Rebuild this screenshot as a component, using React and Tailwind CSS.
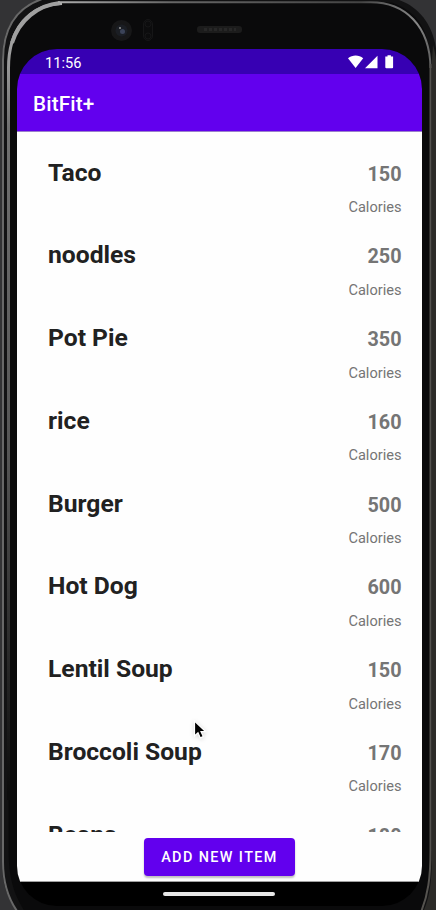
import React from 'react';

const foods = [
  ['Taco', 150],
  ['noodles', 250],
  ['Pot Pie', 350],
  ['rice', 160],
  ['Burger', 500],
  ['Hot Dog', 600],
  ['Lentil Soup', 150],
  ['Broccoli Soup', 170],
  ['Beans', 180],
];

function PhoneFrame() {
  return (
    <svg className="absolute inset-0" width="436" height="910" viewBox="0 0 436 910" aria-hidden="true">
      <defs>
        <linearGradient id="innerRim" gradientUnits="userSpaceOnUse" x1="0" y1="0" x2="0" y2="910">
          <stop offset="0" stopColor="#b0b0b0" />
          <stop offset="0.07" stopColor="#999" />
          <stop offset="0.14" stopColor="#707070" />
          <stop offset="0.5" stopColor="#555" />
          <stop offset="0.87" stopColor="#0d0d0d" />
        </linearGradient>
        <linearGradient id="topRim" gradientUnits="userSpaceOnUse" x1="60" y1="0" x2="436" y2="0">
          <stop offset="0" stopColor="#aaa" />
          <stop offset="0.3" stopColor="#666" />
          <stop offset="0.8" stopColor="#444" />
          <stop offset="0.95" stopColor="#888" />
          <stop offset="1" stopColor="#555" />
        </linearGradient>
      </defs>
      <rect width="436" height="910" fill="#333335" />
      <path d="M2 60C2 28 16 8 42 -1H396C420 6 437 28 437 62V910H17C7 898 2 884 2 862z" fill="#121213" />
      <path d="M433 45C437 58 436 62 436 80V910H424C430 896 432 880 432 850V60z" fill="#2c2b28" />
      <path d="M42 -1C16 8 3 28 3 60V862C3 884 8 898 17 911" fill="none" stroke="#686868" strokeWidth="2" />
      <path d="M58 2.500C26 7 8.500 28 8.500 66V850C8.500 878 14 895 25 912H422C428 898 430 880 430 850V66C430 30 418 12 392 2.500z" fill="#0a0a0b" />
      <path d="M62 3.500C28 5 8.500 30 8.500 68V800" fill="none" stroke="url(#innerRim)" strokeWidth="3" />
      <path d="M60 3C38 5 19 20 12 43" fill="none" stroke="#a0a0a0" strokeWidth="4" />
      <path d="M58 2.300H370C405 2 430 26 430.500 68" fill="none" stroke="url(#topRim)" strokeWidth="2" />
      <path d="M430.500 64V850C430.500 878 428 895 421 912" fill="none" stroke="#55534f" strokeWidth="2" />
      <circle cx="121.500" cy="30.500" r="10.500" fill="#171718" />
      <circle cx="121.500" cy="30.500" r="6" fill="#1b1e24" />
      <circle cx="122.500" cy="31.500" r="2.500" fill="#3b4358" />
      <circle cx="120" cy="28" r="1" fill="#999" />
      <rect x="143.500" y="19.500" width="9" height="21" rx="4.500" fill="#0c0c0d" stroke="#161617" />
      <circle cx="148" cy="24" r="3" fill="none" stroke="#161617" />
      <circle cx="148" cy="36" r="3" fill="none" stroke="#161617" />
      <rect x="197" y="26" width="45" height="7" rx="3" fill="#1c1c1c" />
      <path d="M204 29.500h32" stroke="#272727" strokeWidth="3" strokeDasharray="3 2" />
    </svg>
  );
}

function StatusIcons() {
  return (
    <svg width="46" height="14" viewBox="0 0 46 14" fill="#fff" aria-hidden="true">
      <path d="M0 3.300C4.500-.3 10.800-.3 15.200 3.300L7.600 13z" />
      <path d="M29.500 .7V13.200H17z" />
      <path d="M37.300 1.500h2.200V.2h3.400v1.300h2.200v10.700q0 1-1 1h-5.800q-1 0-1-1z" />
    </svg>
  );
}

function FoodRow({ name, calories }) {
  return (
    <li className="flex h-[82.75px] shrink-0 justify-between pr-[20.5px] pl-[31.5px]">
      <h2 className="pt-[9.6px] text-[24.65px] leading-[30px] font-bold text-[#212121]">{name}</h2>
      <div className="flex flex-col items-end text-[#757575]">
        <span className="pt-[14.6px] text-[19.8px] leading-6 font-bold">{calories}</span>
        <span className="pt-[11.6px] text-[14.6px] leading-[18px]">Calories</span>
      </div>
    </li>
  );
}

export default function App() {
  return (
    <div className="relative h-[910px] w-[436px] overflow-hidden font-['Roboto',sans-serif]">
      <PhoneFrame />
      <div className="relative pt-[49px] pl-[16.5px]">
        <main className="flex h-[857px] w-[405.5px] flex-col overflow-hidden rounded-[40px] bg-black">
          <div className="flex h-[25px] shrink-0 items-center justify-between bg-[#3700b3] pr-[28px] pl-[28.5px] text-white">
            <span className="pt-[3px] text-[14.6px] leading-5">11:56</span>
            <StatusIcons />
          </div>
          <header className="flex h-[57px] shrink-0 items-center bg-[#6200ee] pl-[16.5px]">
            <h1 className="pt-[3px] text-[20.7px] leading-6 font-medium tracking-[0.15px] text-white">BitFit+</h1>
          </header>
          <div className="flex h-[751px] shrink-0 flex-col border-b border-[#a0a0a0] bg-[#fefefe]">
            <ul className="flex h-[701px] shrink-0 flex-col overflow-hidden border-t border-[#9a80cb] pt-4">
              {foods.map(([name, calories]) => (
                <FoodRow key={name} name={name} calories={calories} />
              ))}
            </ul>
            <button className="mt-[6px] ml-[127.5px] h-[38px] w-[151px] shrink-0 rounded bg-[#6200ee] pt-[2px] text-[14.4px] font-medium tracking-[1.4px] text-white shadow-[0_2px_2px_rgba(0,0,0,0.25)]">
              ADD NEW ITEM
            </button>
          </div>
          <div className="mt-[10px] ml-[146.5px] h-1 w-28 shrink-0 rounded-full bg-[#e8e8e8]" />
        </main>
      </div>
      <svg className="absolute top-[720px] left-[193px] drop-shadow-sm" width="14" height="20" viewBox="0 0 14 20" aria-hidden="true">
        <path d="M1.500 1v15l3.500-3.300 2.300 5.200 3-1.300L8 11.600h4.600z" fill="#000" stroke="#fff" strokeWidth="1.200" />
      </svg>
    </div>
  );
}
